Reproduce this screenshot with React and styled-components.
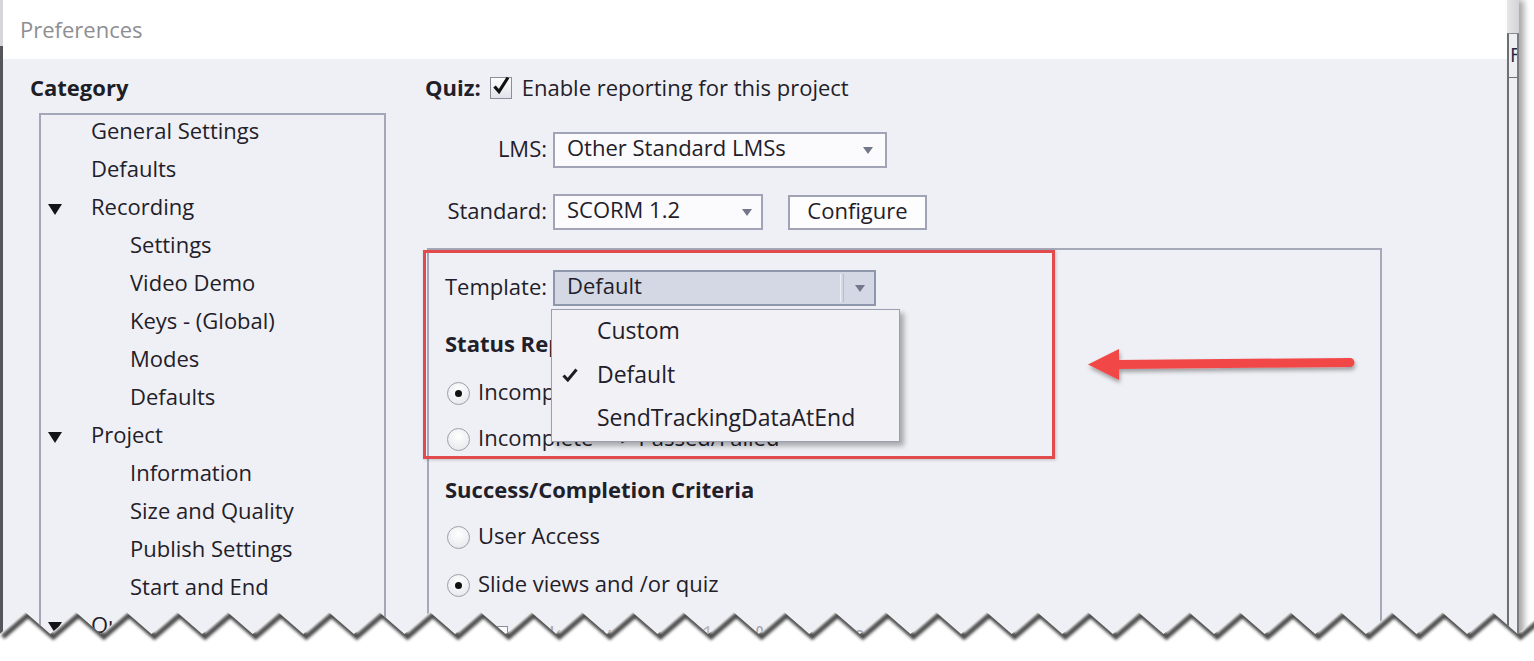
import React from 'react';
import styled, { createGlobalStyle } from 'styled-components';

const GlobalStyle = createGlobalStyle`
  html, body {
    margin: 0;
    padding: 0;
    background: #fff;
  }
  body {
    font-family: 'Open Sans', 'Noto Sans', sans-serif;
    color: #1f2029;
  }
  * {
    box-sizing: border-box;
  }
`;

const tree = [
  { label: 'General Settings', level: 1 },
  { label: 'Defaults', level: 1 },
  { label: 'Recording', level: 1, open: true },
  { label: 'Settings', level: 2 },
  { label: 'Video Demo', level: 2 },
  { label: 'Keys - (Global)', level: 2 },
  { label: 'Modes', level: 2 },
  { label: 'Defaults', level: 2 },
  { label: 'Project', level: 1, open: true },
  { label: 'Information', level: 2 },
  { label: 'Size and Quality', level: 2 },
  { label: 'Publish Settings', level: 2 },
  { label: 'Start and End', level: 2 },
  { label: 'Quiz', level: 1, open: true },
];

const templates = [
  { label: 'Custom' },
  { label: 'Default', checked: true },
  { label: 'SendTrackingDataAtEnd' },
];

// zigzag of the torn bottom edge
const TEAR_HALF = 25.3;
const tearPoints = [];
for (let i = 0; i <= 62; i++) {
  tearPoints.push(`${(-0.3 + i * TEAR_HALF).toFixed(1)},${i % 2 === 0 ? 33 : 11}`);
}
const tearLine = 'M' + tearPoints.join(' L');
const tearFill = tearLine + ' L1560,60 L-10,60 Z';

const App = () => {
  return (
    <Page>
      <GlobalStyle />
      <BehindLeft />
      <Dialog>
        <TitleBar>Preferences</TitleBar>
        <Body>
          <CategoryPane>
            <PaneTitle>Category</PaneTitle>
            <TreeBox>
              {tree.map((item, i) => (
                <TreeItem key={i}>
                  <Twisty>{item.open && <TwistyArrow />}</Twisty>
                  <TreeLabel $level={item.level}>{item.label}</TreeLabel>
                </TreeItem>
              ))}
            </TreeBox>
          </CategoryPane>

          <MainPane>
            <QuizRow>
              <BoldLabel>Quiz:</BoldLabel>
              <CheckBox $checked>
                <svg width="22" height="22" viewBox="0 0 22 22">
                  <path d="M4.5 11.5 L9 16.5 L18 2.5" fill="none" stroke="#111" strokeWidth="3.2" strokeLinejoin="miter" />
                </svg>
              </CheckBox>
              <span>Enable reporting for this project</span>
            </QuizRow>

            <FieldRow $mt={29}>
              <FieldLabel>LMS:</FieldLabel>
              <Select $width={334}>
                <SelectValue>Other Standard LMSs</SelectValue>
                <SelectArrow $mr={12} />
              </Select>
            </FieldRow>

            <FieldRow $mt={26}>
              <FieldLabel>Standard:</FieldLabel>
              <Select $width={210}>
                <SelectValue>SCORM 1.2</SelectValue>
                <SelectArrow $mr={9} />
              </Select>
              <Button>Configure</Button>
            </FieldRow>

            <GroupBox>
              <TemplateRow>
                <TemplateLabel>Template:</TemplateLabel>
                <TemplateField>
                  <Select $width={323} $focused>
                    <SelectValue>Default</SelectValue>
                    <SelectDivider />
                    <SelectArrow $mr={9} />
                  </Select>
                  <Menu>
                    {templates.map((t) => (
                      <MenuItem key={t.label}>
                        <MenuCheck>
                          {t.checked && (
                            <svg width="16" height="14" viewBox="0 0 16 14">
                              <path d="M1.5 7.5 L5.8 12 L14.5 1.5" fill="none" stroke="#1d1d24" strokeWidth="3" />
                            </svg>
                          )}
                        </MenuCheck>
                        {t.label}
                      </MenuItem>
                    ))}
                  </Menu>
                </TemplateField>
              </TemplateRow>

              <Heading $mt={22}>Status Representation</Heading>
              <OptionRow $mt={17}>
                <Radio $checked />
                <span>Incomplete ---&gt; Complete</span>
              </OptionRow>
              <OptionRow $mt={10}>
                <Radio />
                <span>Incomplete ---&gt; Passed/Failed</span>
              </OptionRow>

              <Heading $mt={17}>Success/Completion Criteria</Heading>
              <OptionRow $mt={15}>
                <Radio />
                <span>User Access</span>
              </OptionRow>
              <OptionRow $mt={12}>
                <Radio $checked />
                <span>Slide views and /or quiz</span>
              </OptionRow>
              <SubOptionRow $mt={14}>
                <SmallBox />
                <span>Slide views</span>
                <NumberBox>100</NumberBox>
                <span>%</span>
                <Radio $disabled />
                <span>Slide(s)</span>
              </SubOptionRow>

              <Highlight />
              <ArrowMark width="280" height="50" viewBox="0 0 280 50">
                <defs>
                  <filter id="arrowShadow" x="-10%" y="-50%" width="120%" height="200%">
                    <feDropShadow dx="1" dy="3" stdDeviation="2" floodColor="#000" floodOpacity="0.35" />
                  </filter>
                </defs>
                <g filter="url(#arrowShadow)" fill="#f24747" stroke="#f24747">
                  <path d="M36 24.5 L270 22.5" strokeWidth="9" strokeLinecap="round" fill="none" />
                  <polygon points="8,24.5 39,9 39,40" stroke="none" />
                </g>
              </ArrowMark>
            </GroupBox>
          </MainPane>
        </Body>
      </Dialog>
      <BehindRight>
        <BehindTop />
        <BehindFrame>
          <BehindHeader>F</BehindHeader>
        </BehindFrame>
      </BehindRight>

      <TornEdge width="1534" height="60" viewBox="0 0 1534 60">
        <defs>
          <clipPath id="paperBelow">
            <path d={tearFill} />
          </clipPath>
          <filter id="tearBlur" x="-5%" y="-50%" width="110%" height="200%">
            <feGaussianBlur stdDeviation="1.6" />
          </filter>
        </defs>
        <path d={tearFill} fill="#fff" />
        <g clipPath="url(#paperBelow)">
          <path
            d={tearLine}
            fill="none"
            stroke="#1c1c1c"
            strokeWidth="5"
            opacity="0.8"
            transform="translate(3 3)"
            filter="url(#tearBlur)"
          />
        </g>
      </TornEdge>
    </Page>
  );
};

export default App;

const Page = styled.div`
  position: relative;
  display: flex;
  width: 1534px;
  height: 661px;
  overflow: hidden;
  background: #fff;
`;

const BehindLeft = styled.div`
  width: 3px;
  flex-shrink: 0;
  background: linear-gradient(#d6d6da 0 46px, #55565c 46px);
`;

const Dialog = styled.div`
  display: flex;
  flex-direction: column;
  width: 1504px;
  flex-shrink: 0;
  background: #eff0f5;
  font-size: 22px;
`;

const TitleBar = styled.div`
  display: flex;
  align-items: center;
  height: 59px;
  flex-shrink: 0;
  padding: 0 0 2px 17px;
  background: #fff;
  font-size: 22px;
  color: #8e8e92;
`;

const Body = styled.div`
  display: flex;
  flex: 1;
  min-height: 0;
`;

const CategoryPane = styled.div`
  display: flex;
  flex-direction: column;
  width: 421px;
  flex-shrink: 0;
  padding: 13px 0 0 27px;
`;

const PaneTitle = styled.div`
  font-size: 22px;
  font-weight: 700;
  line-height: 30px;
  color: #1d1e26;
`;

const TreeBox = styled.div`
  flex: 1;
  width: 347px;
  margin: 11px 0 0 9px;
  border: 2px solid #a4a7b8;
  border-bottom: none;
`;

const TreeItem = styled.div`
  display: flex;
  align-items: center;
  height: 38px;
  padding: 0 0 9px 7px;
  white-space: nowrap;
`;

const Twisty = styled.span`
  display: flex;
  align-items: center;
  width: 43px;
  flex-shrink: 0;
  padding-top: 8px;
`;

const TwistyArrow = styled.span`
  width: 0;
  height: 0;
  border-left: 7.5px solid transparent;
  border-right: 7.5px solid transparent;
  border-top: 11px solid #141418;
`;

const TreeLabel = styled.span`
  margin-left: ${({ $level }) => ($level - 1) * 39}px;
`;

const MainPane = styled.div`
  display: flex;
  flex-direction: column;
  flex: 1;
  min-width: 0;
  padding-top: 12px;
`;

const QuizRow = styled.div`
  display: flex;
  align-items: center;
  height: 32px;
  white-space: nowrap;
`;

const BoldLabel = styled.span`
  margin-left: 1px;
  margin-right: 9px;
  font-weight: 700;
`;

const CheckBox = styled.span`
  display: flex;
  align-items: center;
  justify-content: center;
  width: 22px;
  height: 22px;
  margin: 2px 10px 0 0;
  border: 1.5px solid #8c8d99;
  background: linear-gradient(#fdfdfe, #e2e3ea);
  svg {
    overflow: visible;
    margin-top: -4px;
  }
`;

const FieldRow = styled.div`
  display: flex;
  align-items: center;
  height: 36px;
  margin-top: ${({ $mt }) => $mt}px;
  white-space: nowrap;
`;

const FieldLabel = styled.span`
  width: 123px;
  margin-right: 6px;
  padding-bottom: 4px;
  text-align: right;
`;

const Select = styled.div`
  position: relative;
  display: flex;
  align-items: center;
  width: ${({ $width }) => $width}px;
  height: 36px;
  padding-left: 12px;
  border: 2px solid ${({ $focused }) => ($focused ? '#8f97ad' : '#a1a4b6')};
  background: ${({ $focused }) => ($focused ? '#d3d8e4' : '#fbfbfd')};
  white-space: nowrap;
`;

const SelectValue = styled.span`
  flex: 1;
  padding-bottom: 6px;
`;

const SelectDivider = styled.span`
  width: 4px;
  height: 28px;
  margin-right: 11px;
  border-left: 1px solid #eef0f5;
  border-right: 1px solid #b7bdcb;
`;

const SelectArrow = styled.span`
  width: 0;
  height: 0;
  margin-right: ${({ $mr }) => $mr}px;
  border-left: 5.5px solid transparent;
  border-right: 5.5px solid transparent;
  border-top: 7px solid #73778a;
`;

const Button = styled.div`
  display: flex;
  align-items: center;
  justify-content: center;
  width: 139px;
  height: 35px;
  margin-left: 25px;
  padding-bottom: 4px;
  border: 2px solid #a0a3b4;
  background: #fdfdfe;
`;

const GroupBox = styled.div`
  position: relative;
  display: flex;
  flex-direction: column;
  flex: 1;
  width: 955px;
  margin: 18px 0 0 3px;
  padding: 20px 0 0 16px;
  border: 2px solid #a6a9b9;
  border-bottom: none;
`;

const TemplateRow = styled.div`
  display: flex;
  align-items: center;
  height: 36px;
  white-space: nowrap;
`;

const TemplateLabel = styled.span`
  width: 108px;
  padding-bottom: 4px;
`;

const TemplateField = styled.div`
  position: relative;
`;

const Menu = styled.div`
  position: absolute;
  left: -2px;
  top: 39px;
  z-index: 3;
  width: 349px;
  border: 1px solid #9b9fb2;
  background: #f1f1f6;
  box-shadow: 4px 4px 5px rgba(0, 0, 0, 0.3);
  font-size: 23px;
`;

const MenuItem = styled.div`
  display: flex;
  align-items: center;
  height: 43.5px;
  padding-bottom: 3px;
  white-space: nowrap;
`;

const MenuCheck = styled.span`
  display: flex;
  align-items: center;
  width: 45px;
  padding-left: 10px;
  padding-top: 3px;
`;

const Heading = styled.div`
  margin-top: ${({ $mt }) => $mt}px;
  font-weight: 700;
  line-height: 30px;
  white-space: nowrap;
`;

const OptionRow = styled.div`
  display: flex;
  align-items: center;
  gap: 8px;
  height: 36px;
  margin-top: ${({ $mt }) => $mt}px;
  padding-left: 2px;
  white-space: nowrap;
  span {
    padding-bottom: 4px;
  }
`;

const SubOptionRow = styled(OptionRow)`
  padding-left: 45px;
  gap: 10px;
  color: #a4a5ad;
`;

const Radio = styled.span`
  position: relative;
  width: 23px;
  height: 23px;
  flex-shrink: 0;
  border: 1.5px solid ${({ $disabled }) => ($disabled ? '#c8c9d0' : '#9d9ea8')};
  border-radius: 50%;
  background: radial-gradient(circle at 50% 35%, #ffffff, #e3e4ea);
  &::after {
    content: '';
    display: ${({ $checked }) => ($checked ? 'block' : 'none')};
    position: absolute;
    left: 50%;
    top: 50%;
    width: 7px;
    height: 7px;
    margin: -3.5px 0 0 -3.5px;
    border-radius: 50%;
    background: #111;
  }
`;

const SmallBox = styled.span`
  width: 18px;
  height: 18px;
  border: 1.5px solid #8c8d99;
  background: #fbfbfd;
`;

const NumberBox = styled.span`
  width: 44px;
  margin-left: 62px;
  color: #b8b9c0;
`;

const Highlight = styled.div`
  position: absolute;
  left: -6px;
  top: 0;
  z-index: 4;
  width: 632px;
  height: 209px;
  border: 3px solid #e24b4e;
  box-shadow: 1px 1px 3px rgba(0, 0, 0, 0.2);
  pointer-events: none;
`;

const ArrowMark = styled.svg`
  position: absolute;
  left: 651px;
  top: 90px;
  z-index: 4;
  overflow: visible;
`;

const BehindRight = styled.div`
  display: flex;
  flex-direction: column;
  width: 12px;
  flex-shrink: 0;
  box-shadow: 5px 0 6px rgba(0, 0, 0, 0.35);
`;

const BehindTop = styled.div`
  height: 33px;
  background: linear-gradient(90deg, #e6e6e8, #d3d4d7);
`;

const BehindFrame = styled.div`
  flex: 1;
  border-left: 2px solid #6e6f74;
  border-right: 2px solid #7a7b80;
  border-top: 1px solid #8a8b90;
  background: #eeeff3;
`;

const BehindHeader = styled.div`
  height: 44px;
  padding-left: 1px;
  border-bottom: 1px solid #707176;
  overflow: hidden;
  font-size: 20px;
  line-height: 42px;
  color: #1b2a44;
`;

const TornEdge = styled.svg`
  position: absolute;
  left: 0;
  bottom: 0;
  z-index: 10;
  display: block;
`;
